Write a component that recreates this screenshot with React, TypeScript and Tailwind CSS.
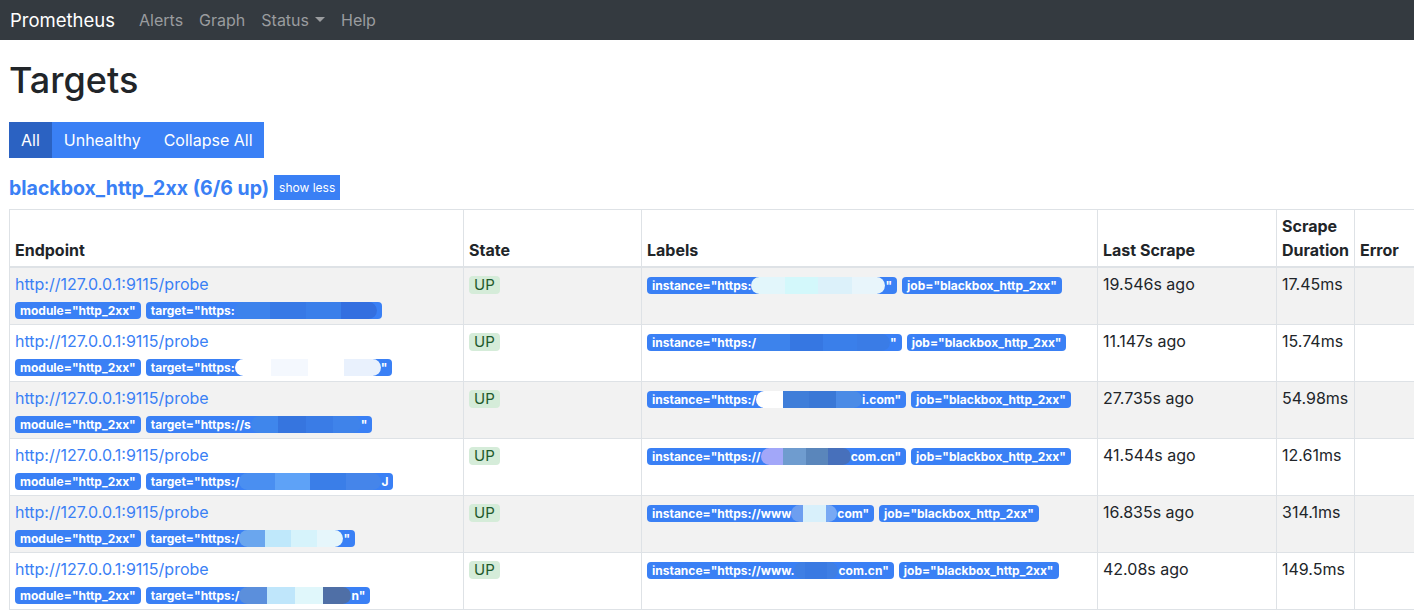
import React from 'react';

type Part = string | { blob: string[]; w: string };

interface Row {
  target: Part[];
  instance: Part[];
  last: string;
  dur: string;
}

const rows: Row[] = [
  {
    target: ['target="https:', { blob: ['bg-[#3d83ec]', 'bg-[#3779e6]', 'bg-[#3a7fea]', 'bg-[#336fe0]'], w: 'w-[142px]' }],
    instance: ['instance="https:', { blob: ['bg-[#e2f6fb]', 'bg-[#d3f8fb]', 'bg-[#dcf1fa]', 'bg-[#e8f5fb]'], w: 'w-[134px]' }, '"'],
    last: '19.546s ago',
    dur: '17.45ms',
  },
  {
    target: ['target="https:', { blob: ['bg-[#ffffff]', 'bg-[#f4f8fe]', 'bg-[#ffffff]', 'bg-[#e9f1fd]'], w: 'w-[146px]' }, '"'],
    instance: ['instance="https:/', { blob: ['bg-[#3d83ec]', 'bg-[#3677e2]', 'bg-[#3a7fea]', 'bg-[#3a7ce6]'], w: 'w-[134px]' }, '"'],
    last: '11.147s ago',
    dur: '15.74ms',
  },
  {
    target: ['target="https://s', { blob: ['bg-[#3f86ec]', 'bg-[#3675df]', 'bg-[#3a7ce6]', 'bg-[#3f83ea]'], w: 'w-[110px]' }, '"'],
    instance: ['instance="https:/', { blob: ['bg-[#ffffff]', 'bg-[#3f7ed9]', 'bg-[#3a78d6]', 'bg-[#4b8be6]'], w: 'w-[106px]' }, 'i.com"'],
    last: '27.735s ago',
    dur: '54.98ms',
  },
  {
    target: ['target="https:/', { blob: ['bg-[#4a8ff1]', 'bg-[#5ea2f7]', 'bg-[#3a7ee8]', 'bg-[#4585ea]'], w: 'w-[142px]' }, 'J'],
    instance: ['instance="https://', { blob: ['bg-[#a2a7f9]', 'bg-[#6f9ccf]', 'bg-[#5a86bb]', 'bg-[#4770bb]'], w: 'w-[90px]' }, 'com.cn"'],
    last: '41.544s ago',
    dur: '12.61ms',
  },
  {
    target: ['target="https:/', { blob: ['bg-[#6aa6ee]', 'bg-[#bfe8fb]', 'bg-[#d6f3fb]', 'bg-[#e6f6fb]'], w: 'w-[104px]' }, '"'],
    instance: ['instance="https://www', { blob: ['bg-[#6d9ef0]', 'bg-[#d8f0fb]', 'bg-[#d8f0fb]', 'bg-[#78a9f4]'], w: 'w-[46px]' }, 'com"'],
    last: '16.835s ago',
    dur: '314.1ms',
  },
  {
    target: ['target="https:/', { blob: ['bg-[#5b8fdc]', 'bg-[#bfe6fb]', 'bg-[#e0f7fb]', 'bg-[#4f6fa6]'], w: 'w-[112px]' }, 'n"'],
    instance: ['instance="https://www.', { blob: ['bg-[#3f7fe4]', 'bg-[#3a7ae2]', 'bg-[#3a7ae2]', 'bg-[#3f7fe4]'], w: 'w-[44px]' }, 'com.cn"'],
    last: '42.08s ago',
    dur: '149.5ms',
  },
];

function Blob({ blob, w }: { blob: string[]; w: string }) {
  return (
    <span className={`inline-flex ${w} h-[17px] rounded-full overflow-hidden`}>
      {blob.map((c, i) => (
        <span key={i} className={`flex-1 ${c}`} />
      ))}
    </span>
  );
}

function Badge({ parts }: { parts: Part[] }) {
  return (
    <span className="inline-flex items-center h-[17px] mr-[5px] rounded-[4px] bg-[#3a80f5] px-[5px] text-[12px] font-bold leading-[17px] text-white whitespace-nowrap">
      {parts.map((p, i) =>
        typeof p === 'string' ? <span key={i}>{p}</span> : <Blob key={i} blob={p.blob} w={p.w} />
      )}
    </span>
  );
}

const cell = 'border border-[#dee2e6] px-[5px] py-[4px] align-top';

export default function App() {
  return (
    <div
      className="w-[1414px] h-[613px] overflow-hidden bg-white text-[#212529] text-[16px] leading-[24px]"
      style={{ fontFamily: 'Inter, "Liberation Sans", Arial, sans-serif' }}
    >
      <nav className="h-[40px] bg-[#343a40] flex items-center pl-[10px]">
        <span className="text-[18.5px] text-white mr-[16px]">Prometheus</span>
        <div className="flex text-[16px] text-[#9a9c9f]">
          <span className="px-[8px]">Alerts</span>
          <span className="px-[8px]">Graph</span>
          <span className="px-[8px] flex items-center">
            Status
            <svg width="10" height="6" viewBox="0 0 10 6" className="ml-[6px]">
              <path d="M0 0 L10 0 L5 5 Z" fill="#9a9c9f" />
            </svg>
          </span>
          <span className="px-[8px]">Help</span>
        </div>
      </nav>

      <div className="pl-[9px]">
        <h1 className="mt-[16px] text-[36px] leading-[48px] font-medium">Targets</h1>
        <div className="mt-[18px] inline-flex">
          <button className="bg-[#2b62c2] text-white px-[12px] py-[6px] leading-[24px]">All</button>
          <button className="bg-[#3a80f5] text-white px-[12px] py-[6px] leading-[24px]">Unhealthy</button>
          <button className="bg-[#3a80f5] text-white px-[11px] py-[6px] leading-[24px]">Collapse All</button>
        </div>
        <div className="mt-[17px] flex items-center">
          <h2 className="text-[19.5px] font-bold text-[#3a80f5] leading-[24px]">blackbox_http_2xx (6/6 up)</h2>
          <button className="ml-[5px] bg-[#3a80f5] text-white text-[12px] leading-[17px] px-[5px] py-[4px]">show less</button>
        </div>

        <table className="mt-[9px] table-fixed border-collapse w-[1460px]">
          <colgroup>
            <col className="w-[454px]" />
            <col className="w-[178px]" />
            <col className="w-[456px]" />
            <col className="w-[179px]" />
            <col className="w-[78px]" />
            <col />
          </colgroup>
          <thead>
            <tr>
              {['Endpoint', 'State', 'Labels', 'Last Scrape', 'Scrape Duration', 'Error'].map((h) => (
                <th
                  key={h}
                  className="border border-[#dee2e6] border-b-2 text-left align-bottom font-bold px-[5px] py-[4px] h-[56px]"
                >
                  {h}
                </th>
              ))}
            </tr>
          </thead>
          <tbody>
            {rows.map((r, i) => (
              <tr key={i} className={i % 2 === 0 ? 'bg-[#f2f2f2]' : 'bg-white'}>
                <td className={`${cell} h-[57px]`}>
                  <div className="h-[24px] text-[#3a80f5]">http://127.0.0.1:9115/probe</div>
                  <div className="h-[24px] flex items-start pt-[6px]">
                    <Badge parts={['module="http_2xx"']} />
                    <Badge parts={r.target} />
                  </div>
                </td>
                <td className={cell}>
                  <span className="inline-block rounded-[4px] bg-[#d5ecd9] text-[#1e5a2c] text-[15px] leading-[18px] px-[5px] mt-[3px]">
                    UP
                  </span>
                </td>
                <td className={cell}>
                  <div className="h-[24px] flex items-start pt-[5px]">
                    <Badge parts={r.instance} />
                    <Badge parts={['job="blackbox_http_2xx"']} />
                  </div>
                </td>
                <td className={cell}>{r.last}</td>
                <td className={cell}>{r.dur}</td>
                <td className={cell}></td>
              </tr>
            ))}
          </tbody>
        </table>
      </div>
    </div>
  );
}
